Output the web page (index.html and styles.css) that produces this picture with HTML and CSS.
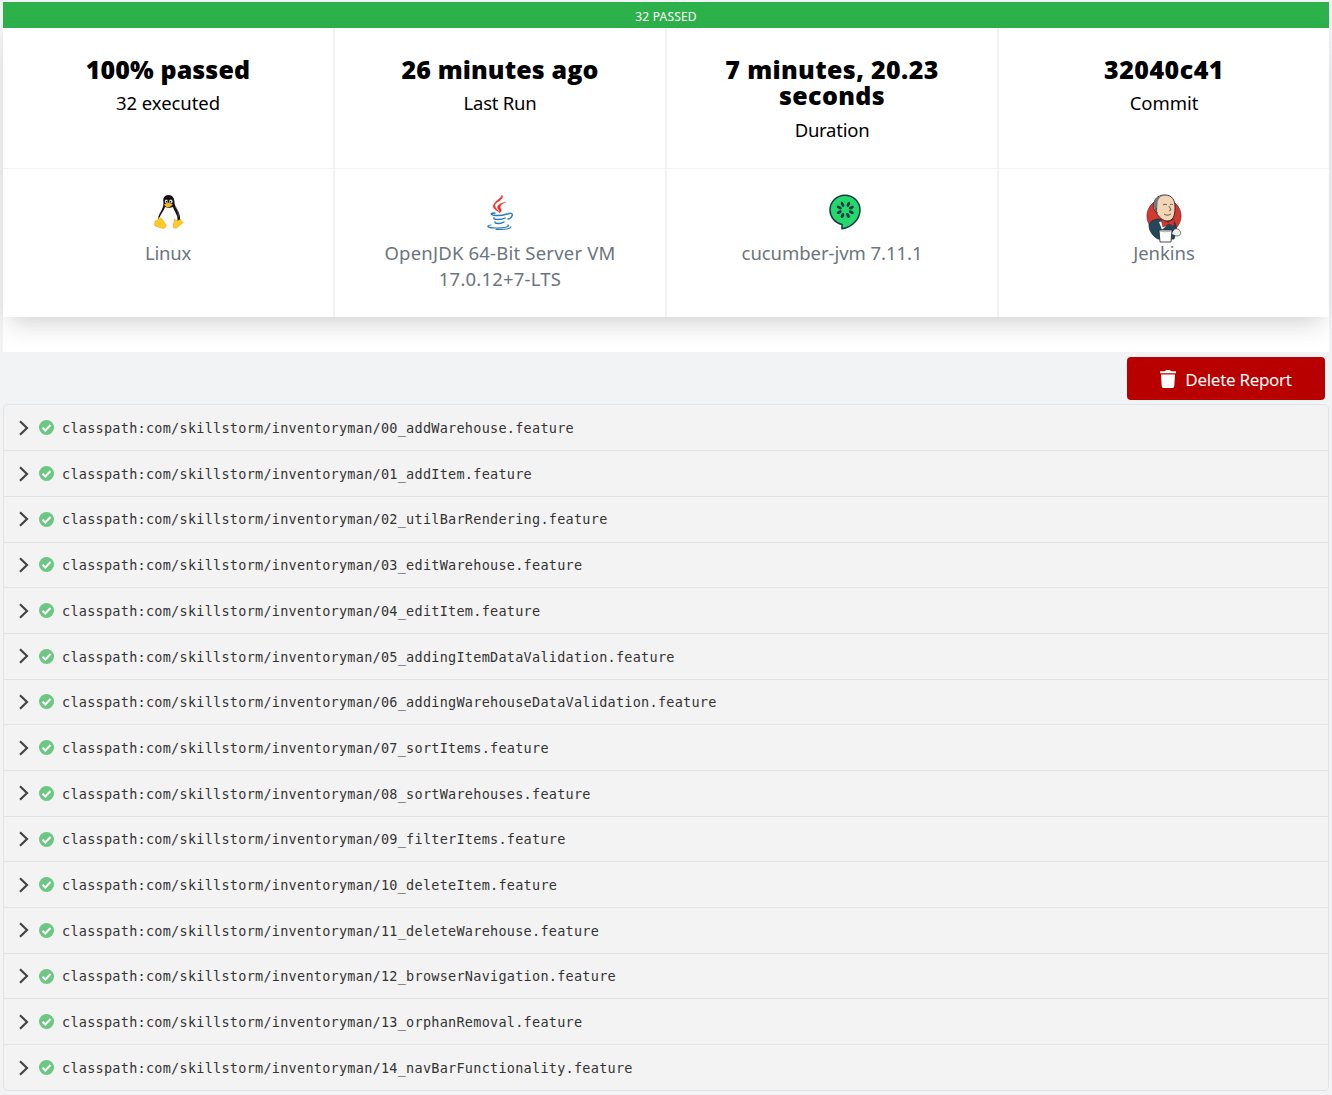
FILE: index.html
```html
<!DOCTYPE html>
<html lang="en">
<head>
<meta charset="utf-8">
<title>Cucumber Report</title>
<link rel="stylesheet" href="styles.css">
</head>
<body>
<main class="report">
  <section class="overview">
    <div class="status-bar">32 PASSED</div>
    <div class="summary">
      <div class="cell"><h2 class="value">100% passed</h2><p class="label">32 executed</p></div>
      <div class="cell"><h2 class="value">26 minutes ago</h2><p class="label l-short">Last Run</p></div>
      <div class="cell"><h2 class="value v-dur">7 minutes, 20.23<br>seconds</h2><p class="label l-short">Duration</p></div>
      <div class="cell"><h2 class="value v-commit">32040c41</h2><p class="label">Commit</p></div>
      <div class="cell env">
        <svg class="logo linux" width="30" height="36" viewBox="0 0 30 36">
          <path d="M9.500 9C8.500 4 10.500 1 14.500 1s6 3 6 8c0 4 6.500 9 5.500 17l-3 6H7L4 25c0-5 5.500-9 5.500-16z" fill="#111"/>
          <path d="M11 13l4 1 4-1c1 4 5 8 4.500 13 0 5-3.500 8-8.500 8-6 0-9.500-3-9.500-9 0-4 4.500-8 5.500-12z" fill="#fafafa"/>
          <path d="M21.500 13c3 4 3 7 2.500 10" fill="none" stroke="#777" stroke-width=".7"/>
          <ellipse cx="12.300" cy="7.500" rx="1.500" ry="1.900" fill="#ddd"/><ellipse cx="16.800" cy="7.500" rx="1.800" ry="2" fill="#ddd"/>
          <circle cx="12.700" cy="7.800" r=".8"/><circle cx="16.400" cy="7.800" r=".8"/>
          <path d="M10 10.500l4-2 5 2-4 3c-2 0-4-1-5-3z" fill="#f7b719"/>
          <path d="M5 23l3 2 4 6c0 3-2 4-5 3l-6-2c-1-2 0-3 0-5l3-1z" fill="#ffca28" stroke="#dba316" stroke-width=".5"/>
          <path d="M20.500 25c2 2 4 2 6 0l1 2c2 1 2 2 0 3l-5 4c-3 1-4-1-3-4z" fill="#ffca28" stroke="#dba316" stroke-width=".5"/>
        </svg>
        <p class="label l-short">Linux</p>
      </div>
      <div class="cell env">
        <svg class="logo" width="28" height="36" viewBox="0 0 28 36" fill="none">
          <path d="M16 1c3 5-8 7-7 11 0 2 3 4 4 6-5-3-7-5-5-8 2-4 7-5 8-9zM20 8c-5 2-7 4-5 7 1 2 0 3-2 4 1-2 0-3-1-4-2-4 3-6 8-7z" fill="#e5322d" stroke="#e5322d" stroke-width=".4"/>
          <g stroke="#267bb9" stroke-width="1.500" stroke-linecap="round"><path d="M9 19c-4 0-5 1-2 2 4 1 11 0 14-1M8 24c-1 2 8 2 11 0M9 28c0 2 6 2 9 0M22 20c3-2 5 0 4 2-1 2-3 3-4 3"/><path d="M5 31c-6 1-3 3 5 3 8 0 14-1 12-3M10 35.300c8 .4 14-.6 15-2.300" stroke-width="1.200"/></g>
        </svg>
        <p class="label l-jvm">OpenJDK 64-Bit Server VM<br>17.0.12+7-LTS</p>
      </div>
      <div class="cell env">
        <svg class="logo cucumber" width="32" height="36" viewBox="0 0 32 36">
          <path d="M16 1.200C7.700 1.200 1 7.800 1 16c0 7 5 13 12 14.600v4.100C23 33.500 31 25 31 16 31 7.800 24.300 1.200 16 1.200z" fill="#23d96c" stroke="#173647" stroke-width="1.500"/>
          <g fill="#173647"><ellipse cx="13.500" cy="10.300" rx="1.500" ry="2.700" transform="rotate(-25 13.500 10.300)"/><ellipse cx="19.400" cy="10.300" rx="1.500" ry="2.700" transform="rotate(25 19.400 10.300)"/><ellipse cx="10.300" cy="13.500" rx="2.700" ry="1.500" transform="rotate(25 10.300 13.500)"/><ellipse cx="22.300" cy="13.700" rx="2.700" ry="1.500" transform="rotate(-25 22.300 13.700)"/><ellipse cx="10.300" cy="18.200" rx="2.700" ry="1.500" transform="rotate(-25 10.300 18.200)"/><ellipse cx="22.300" cy="18.200" rx="2.700" ry="1.500" transform="rotate(25 22.300 18.200)"/><ellipse cx="13.500" cy="21.500" rx="1.500" ry="2.700" transform="rotate(25 13.500 21.500)"/><ellipse cx="19" cy="21.500" rx="1.500" ry="2.700" transform="rotate(-25 19 21.500)"/></g>
        </svg>
        <p class="label">cucumber-jvm 7.11.1</p>
      </div>
      <div class="cell env">
        <svg class="logo jenkins" width="36" height="49" viewBox="0 0 36 49">
          <circle cx="18" cy="22" r="17" fill="#d33833" stroke="#81211e" stroke-width=".8"/>
          <path d="M3 31c1-4 6-6 11-6h11c4 2 6 7 5 12l-2 8H12C6 42 3 36 3 31z" fill="#24485a" stroke="#172e39" stroke-width=".8"/>
          <path d="M8 9c1-6 6-8 11-8 7 0 10 5 10 12 0 9-2 14-8 14-6 0-10-7-11-9-3-3-3-6-2-9z" fill="#f0d6b7" stroke="#252525" stroke-width=".9"/>
          <path d="M8.500 8c1-4 5-6 8-6-3 1-5 4-5 8l-.5 8c-3-2-3.500-6-2.500-10z" fill="#777"/>
          <path d="M17 11c1-1 3-1 4 0M24 11c1-1 2-1 3 0M23 12l2 4-2 1M18 20c3 2 5 1 7 0M11 14c-2 0-1 4 1 5" stroke="#49372d" stroke-width=".8" fill="none"/>
          <path d="M17 27l3 5-4 4-3-8z" fill="#fff"/>
          <path d="M15 25l7 3.500 6-3.500v7l-5-2-6 3z" fill="#d33833" stroke="#81211e" stroke-width=".6"/>
          <path d="M27 37c2-4 6-2 7 0 2 3 0 5-4 5l-5-2z" fill="#eee" stroke="#252525" stroke-width=".6"/>
          <path d="M13 36h13l-1 12H14z" fill="#fff" stroke="#222" stroke-width=".8"/><path d="M14 37c3 1 7 1 11 0" stroke="#888" stroke-width=".7" fill="none"/>
        </svg>
        <p class="label">Jenkins</p>
      </div>
    </div>
  </section>
  <div class="toolbar">
    <button class="delete"><svg width="16" height="18" viewBox="0 0 16 18" fill="#fff"><path d="M0 1.200h5L6 0h4l1 1.200h5v2H0zM1 4.500h14l-.7 11.500q-.1 2-2 2H3.700q-1.900 0-2-2z"/></svg><span>Delete Report</span></button>
  </div>
  <ul class="features"></ul>
</main>
<script src="features.js"></script>
</body>
</html>
```
FILE: styles.css
```css
* { box-sizing: border-box; }
body { margin: 0; padding: 2px 3px 0; height: 1095px; overflow: hidden; background: #f2f3f5; font-family: "Noto Sans", "Open Sans", sans-serif; color: #000; }
.overview { height: 350px; background: #fff; }
.status-bar { height: 26px; padding-top: 2px; background: #2db14b; color: #fff; font-size: 12px; line-height: 25px; text-align: center; letter-spacing: .2px; }
.summary { display: grid; grid-template-columns: repeat(3, 332px) 1fr; grid-template-rows: 141px 148px; background: #fff; box-shadow: 0 16px 24px -8px rgba(0,0,0,.15), 0 0 14px rgba(0,0,0,.04); }
.cell { padding-top: 28px; border-right: 2px solid #f2f3f5; border-bottom: 1px solid #f2f3f5; text-align: center; }
.cell:nth-child(4n) { border-right: 0; }
.env { padding-top: 25px; border-bottom: 0; color: #6c757d; }
.value { margin: 0; font-family: "Open Sans", sans-serif; font-weight: 800; font-size: 25px; line-height: 26.400px; letter-spacing: .1px; }
.v-dur { letter-spacing: .350px; }
.v-commit { letter-spacing: .5px; }
.label { margin: 8px 0 0; font-size: 18.500px; line-height: 26px; letter-spacing: -.05px; }
.l-short { letter-spacing: -.250px; }
.l-jvm { letter-spacing: .2px; }
.logo { display: block; margin: 0 auto; }
.env .label { margin-top: 10px; }
.linux { position: relative; left: 1px; }
.cucumber { position: relative; left: 13px; }
.env .jenkins { margin-bottom: -13px; }
.toolbar { height: 52px; display: flex; justify-content: flex-end; align-items: flex-start; padding: 5px 4px 0; }
.delete { width: 198px; height: 43px; padding: 0; display: flex; align-items: center; justify-content: center; gap: 9px; border: 0; border-radius: 4px; background: #b90000; color: #fff; font: 17px "Noto Sans", sans-serif; letter-spacing: -.3px; }
.delete span { padding-top: 2px; }
.features { margin: 0; padding: .5px 0 0; list-style: none; border: 1px solid #e1e3e5; border-radius: 5px; background: #f3f3f3; }
.feature { height: 45.700px; padding-left: 14px; display: flex; align-items: center; border-bottom: 1px solid #e1e3e5; font-family: "DejaVu Sans Mono", monospace; font-size: 13.500px; letter-spacing: .265px; color: #333; white-space: pre; }
.feature:last-child { height: 45.200px; border-bottom: 0; }
.chevron { width: 12px; height: 16px; margin-right: 9px; }
.check { width: 15px; height: 15px; margin-right: 8px; }
.feature span { padding-top: .5px; }
```
FILE: features.js
```js
const names = [
  "00_addWarehouse", "01_addItem", "02_utilBarRendering", "03_editWarehouse", "04_editItem",
  "05_addingItemDataValidation", "06_addingWarehouseDataValidation", "07_sortItems",
  "08_sortWarehouses", "09_filterItems", "10_deleteItem", "11_deleteWarehouse",
  "12_browserNavigation", "13_orphanRemoval", "14_navBarFunctionality"
];
document.querySelector(".features").innerHTML = names.map(name => `<li class="feature">
<svg class="chevron" viewBox="0 0 12 16"><path d="M2 1.200l7 6.800-7 6.800" fill="none" stroke="#444" stroke-width="2.200"/></svg><svg class="check" viewBox="0 0 15 15"><circle cx="7.500" cy="7.500" r="7.500" fill="#6cc783"/><path d="M3.500 7.800l2.800 2.700 5.200-5.500" fill="none" stroke="#fff" stroke-width="2"/></svg><span>classpath:com/skillstorm/inventoryman/${name}.feature</span></li>`).join("");
```
